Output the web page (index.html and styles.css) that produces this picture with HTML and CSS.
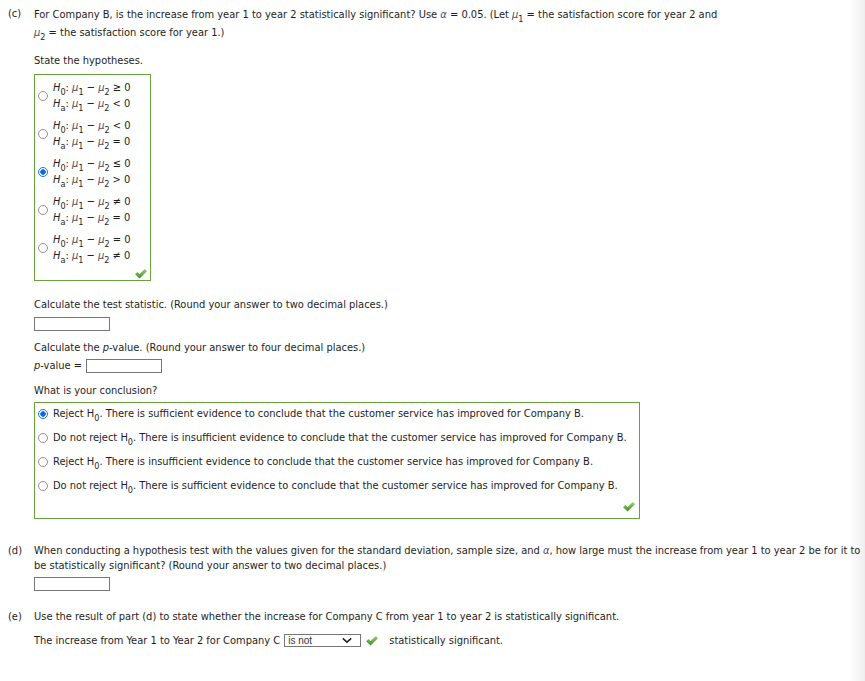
FILE: index.html
```html
<!DOCTYPE html>
<html lang="en">

<head>
    <meta charset="UTF-8">
    <title>Hypothesis Test - Company B</title>
    <link rel="stylesheet" href="styles.css">
</head>

<body>
    <svg class="defs" width="0" height="0">
        <defs>
            <linearGradient id="checkFill" x1="0" y1="0" x2="0" y2="1">
                <stop offset="0" stop-color="#9bd065" />
                <stop offset="1" stop-color="#3f8f2a" />
            </linearGradient>
            <symbol id="check" viewBox="0 0 12 10">
                <polygon points="0,5.2 2.4,3 4.6,5.1 9.8,0 12,2.2 4.6,9.6" fill="url(#checkFill)" />
            </symbol>
        </defs>
    </svg>

    <!-- Part (c) -->
    <div class="part">
        <div class="part-label">(c)</div>
        <div class="part-body">
            <p class="lead">For Company B, is the increase from year 1 to year 2 statistically significant? Use <i class="greek">α</i> = 0.05. (Let <i class="greek">μ</i><sub>1</sub> = the satisfaction score for year 2 and<br><i class="greek">μ</i><sub>2</sub> = the satisfaction score for year 1.)</p>

            <p class="prompt hyp-prompt">State the hypotheses.</p>
            <div class="answer-box hyp-box">
                <div class="hyp-option">
                    <span class="radio"></span>
                    <span class="hyp-lines">
                        <span><i>H</i><sub>0</sub>: <i class="greek">μ</i><sub>1</sub> − <i class="greek">μ</i><sub>2</sub> ≥ 0</span>
                        <span><i>H</i><sub>a</sub>: <i class="greek">μ</i><sub>1</sub> − <i class="greek">μ</i><sub>2</sub> &lt; 0</span>
                    </span>
                </div>
                <div class="hyp-option">
                    <span class="radio"></span>
                    <span class="hyp-lines">
                        <span><i>H</i><sub>0</sub>: <i class="greek">μ</i><sub>1</sub> − <i class="greek">μ</i><sub>2</sub> &lt; 0</span>
                        <span><i>H</i><sub>a</sub>: <i class="greek">μ</i><sub>1</sub> − <i class="greek">μ</i><sub>2</sub> = 0</span>
                    </span>
                </div>
                <div class="hyp-option">
                    <span class="radio checked"></span>
                    <span class="hyp-lines">
                        <span><i>H</i><sub>0</sub>: <i class="greek">μ</i><sub>1</sub> − <i class="greek">μ</i><sub>2</sub> ≤ 0</span>
                        <span><i>H</i><sub>a</sub>: <i class="greek">μ</i><sub>1</sub> − <i class="greek">μ</i><sub>2</sub> &gt; 0</span>
                    </span>
                </div>
                <div class="hyp-option">
                    <span class="radio"></span>
                    <span class="hyp-lines">
                        <span><i>H</i><sub>0</sub>: <i class="greek">μ</i><sub>1</sub> − <i class="greek">μ</i><sub>2</sub> ≠ 0</span>
                        <span><i>H</i><sub>a</sub>: <i class="greek">μ</i><sub>1</sub> − <i class="greek">μ</i><sub>2</sub> = 0</span>
                    </span>
                </div>
                <div class="hyp-option">
                    <span class="radio"></span>
                    <span class="hyp-lines">
                        <span><i>H</i><sub>0</sub>: <i class="greek">μ</i><sub>1</sub> − <i class="greek">μ</i><sub>2</sub> = 0</span>
                        <span><i>H</i><sub>a</sub>: <i class="greek">μ</i><sub>1</sub> − <i class="greek">μ</i><sub>2</sub> ≠ 0</span>
                    </span>
                </div>
                <div class="box-check"><svg class="check-icon"><use href="#check" /></svg></div>
            </div>

            <p class="prompt stat-prompt">Calculate the test statistic. (Round your answer to two decimal places.)</p>
            <span class="text-input block-input"></span>

            <p class="prompt pval-prompt">Calculate the <i>p</i>-value. (Round your answer to four decimal places.)</p>
            <div class="inline-row pval-row">
                <span><i>p</i>-value =</span>
                <span class="text-input"></span>
            </div>

            <p class="prompt concl-prompt">What is your conclusion?</p>
            <div class="answer-box concl-box">
                <div class="concl-option"><span class="radio checked"></span><span>Reject H<sub>0</sub>. There is sufficient evidence to conclude that the customer service has improved for Company B.</span></div>
                <div class="concl-option"><span class="radio"></span><span>Do not reject H<sub>0</sub>. There is insufficient evidence to conclude that the customer service has improved for Company B.</span></div>
                <div class="concl-option"><span class="radio"></span><span>Reject H<sub>0</sub>. There is insufficient evidence to conclude that the customer service has improved for Company B.</span></div>
                <div class="concl-option"><span class="radio"></span><span>Do not reject H<sub>0</sub>. There is sufficient evidence to conclude that the customer service has improved for Company B.</span></div>
                <div class="box-check"><svg class="check-icon"><use href="#check" /></svg></div>
            </div>
        </div>
    </div>

    <!-- Part (d) -->
    <div class="part part-d">
        <div class="part-label">(d)</div>
        <div class="part-body">
            <p class="plain">When conducting a hypothesis test with the values given for the standard deviation, sample size, and <i class="greek">α</i>, how large must the increase from year 1 to year 2 be for it to<br>be statistically significant? (Round your answer to two decimal places.)</p>
            <span class="text-input block-input"></span>
        </div>
    </div>

    <!-- Part (e) -->
    <div class="part part-e">
        <div class="part-label">(e)</div>
        <div class="part-body">
            <p class="plain">Use the result of part (d) to state whether the increase for Company C from year 1 to year 2 is statistically significant.</p>
            <div class="inline-row answer-row">
                <span>The increase from Year 1 to Year 2 for Company C</span>
                <span class="select-box">
                    <span class="select-value">is not</span>
                    <svg class="chevron" viewBox="0 0 12 8"><polyline points="1,1.5 6,6 11,1.5" /></svg>
                </span>
                <svg class="check-icon inline-check"><use href="#check" /></svg>
                <span class="after-select">statistically significant.</span>
            </div>
        </div>
    </div>
</body>

</html>
```

FILE: styles.css
```css
html {
    background: linear-gradient(to right, #fff 0, #fff calc(100% - 16px), #eeeeee 100%);
}

body {
    font-family: "DejaVu Sans Condensed", "DejaVu Sans", sans-serif;
    font-size: 11px;
    line-height: 15px;
    color: #1e1e1e;
    margin: 0;
    padding: 6px 0 0 8px;
}

.defs {
    display: block;
    width: 0;
    height: 0;
}

p {
    margin: 0;
}

i {
    font-style: italic;
}

.greek {
    color: #4a4a66;
}

sub {
    font-size: 9px;
    line-height: 0;
    vertical-align: -4px;
}

.part {
    display: flex;
}

.part-label {
    width: 26px;
    flex: none;
}

.part-body {
    flex: 1;
}

.lead {
    line-height: 18px;
}

.prompt {
    line-height: 15px;
}

.hyp-prompt {
    margin-top: 11px;
}

.answer-box {
    border: 1px solid #6ba13c;
    box-sizing: border-box;
}

.hyp-box {
    width: 117px;
    margin-top: 6px;
    padding: 5px 3px 1px 3px;
}

.hyp-option {
    display: flex;
    align-items: center;
    margin-bottom: 6px;
}

.hyp-lines {
    display: flex;
    flex-direction: column;
    line-height: 16px;
}

.radio {
    width: 10px;
    height: 10px;
    border: 1px solid #8f8f8f;
    border-radius: 50%;
    box-sizing: border-box;
    background: #fff;
    flex: none;
    margin-right: 5px;
    display: inline-block;
}

.radio.checked {
    border-color: #1a73e8;
    background: radial-gradient(circle, #0e5fcf 0, #1a6fe0 2.5px, #fff 3px);
}

.box-check {
    display: flex;
    justify-content: flex-end;
}

.check-icon {
    width: 12px;
    height: 10px;
}

.hyp-box .box-check {
    margin-top: -1px;
}

.stat-prompt {
    margin-top: 16px;
}

.text-input {
    display: inline-block;
    width: 76px;
    height: 14px;
    border: 1px solid #767676;
    box-sizing: border-box;
    background: #fff;
}

.block-input {
    display: block;
    margin-top: 5px;
}

.pval-prompt {
    margin-top: 9px;
}

.inline-row {
    display: flex;
    align-items: center;
}

.pval-row {
    margin-top: 3px;
}

.pval-row .text-input {
    margin-left: 4px;
}

.concl-prompt {
    margin-top: 10px;
}

.concl-box {
    width: 606px;
    margin-top: 4px;
    padding: 3px 4px 6px 3px;
}

.concl-option {
    display: flex;
    align-items: center;
    margin-bottom: 9px;
}

.part-d {
    margin-top: 24px;
}

.plain {
    line-height: 15px;
}

.part-d .block-input {
    margin-top: 4px;
}

.part-e {
    margin-top: 18px;
}

.answer-row {
    margin-top: 9px;
}

.select-box {
    display: inline-flex;
    align-items: center;
    justify-content: space-between;
    width: 77px;
    height: 13px;
    border: 1px solid #767676;
    box-sizing: border-box;
    margin-left: 4px;
    padding: 0 8px 0 3px;
    font-family: "Liberation Sans", Arial, sans-serif;
    font-size: 10px;
    line-height: 11px;
    color: #333;
}

.chevron {
    width: 10px;
    height: 7px;
    fill: none;
    stroke: #222;
    stroke-width: 1.8;
}

.inline-check {
    margin-left: 5px;
}

.after-select {
    margin-left: 11px;
}
```
